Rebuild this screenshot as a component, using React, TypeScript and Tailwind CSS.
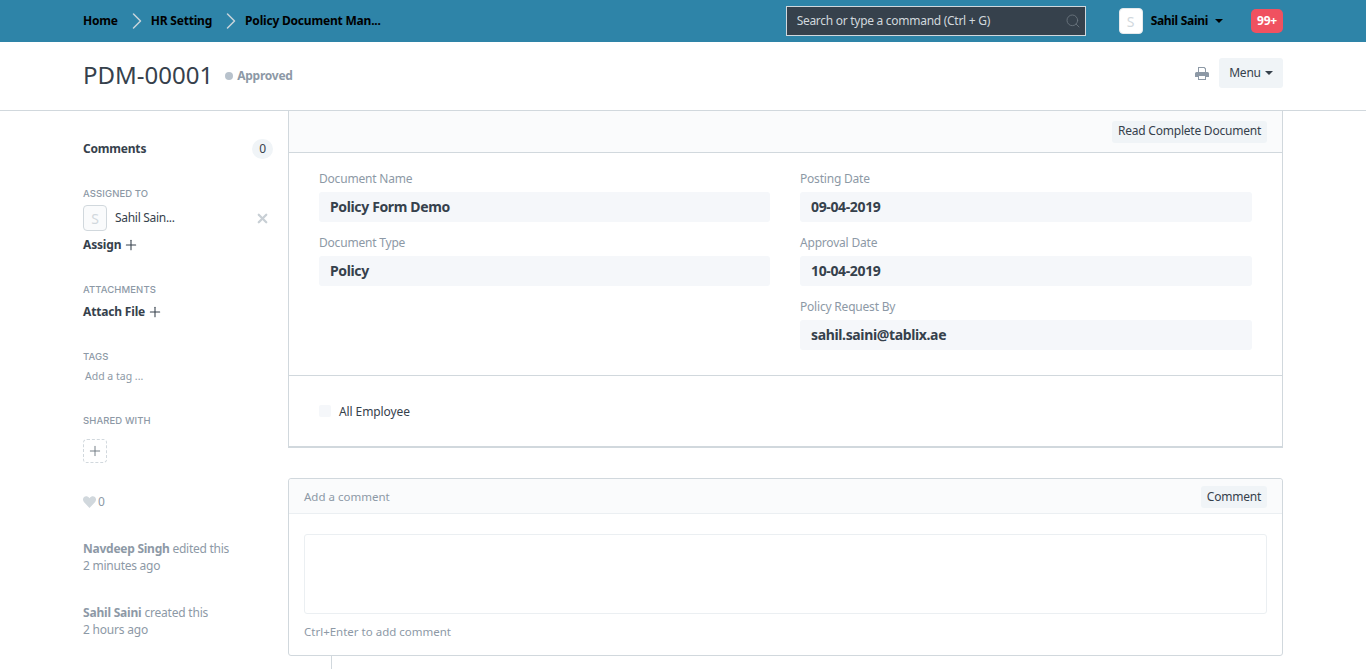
import { ChevronRight, Plus, Search, X } from 'lucide-react';

const font = "font-['Noto_Sans','Open_Sans',sans-serif]";

const Caret = ({ className = 'border-t-[#36414c]' }: { className?: string }) => (
  <span className={`inline-block w-0 h-0 border-x-[4px] border-x-transparent border-t-[4px] ${className}`}></span>
);

const SectionLabel = ({ children }: { children: string }) => (
  <div className="font-['Inter',sans-serif] text-[9.5px] leading-[12px] font-medium text-[#8d99a6] tracking-[0.1px]">{children}</div>
);

const AddLink = ({ label }: { label: string }) => (
  <div className="flex items-center gap-[2px] h-[18px] text-[12px] font-bold text-[#36414c] tracking-[-0.17px]">
    {label}
    <Plus size={16} strokeWidth={1.6} />
  </div>
);

const Field = ({ label, value }: { label: string; value: string }) => (
  <div className="mb-[11px]">
    <div className="h-[20px] mb-[3px] text-[12px] leading-[20px] text-[#8d99a6] tracking-[-0.2px]">{label}</div>
    <div className="h-[30px] px-[11px] rounded-[3px] bg-[#f5f7fa] text-[14px] leading-[30px] font-bold text-[#36414c] tracking-[-0.36px]">
      {value}
    </div>
  </div>
);

const Crumb = ({ label, last }: { label: string; last?: boolean }) => (
  <div className="flex items-center">
    <span className="text-[12px] font-bold text-black tracking-[-0.2px]">{label}</span>
    {!last && <ChevronRight size={28} strokeWidth={1.3} className="text-[#c6d3da] ml-[5px]" />}
  </div>
);

const TopBar = () => (
  <div className="h-[42px] bg-[#2e84a8] flex items-center pl-[83px] pr-[83px]">
    <Crumb label="Home" />
    <Crumb label="HR Setting" />
    <Crumb label="Policy Document Man..." last />
    <div className="ml-auto flex items-center">
      <div className="w-[300px] h-[30px] flex items-center justify-between pl-[10px] pr-[4px] bg-[#36414c] border border-[#d1d8dd] text-[12px] text-[#d1d8dd] tracking-[-0.28px]">
        Search or type a command (Ctrl + G)
        <Search size={16} strokeWidth={1.3} className="text-[#6c7680]" />
      </div>
      <div className="ml-[33px] w-[24px] h-[26px] flex items-center justify-center rounded-[4px] bg-white border border-[#e5e9ec] text-[14px] text-[#d1d8dd]">
        S
      </div>
      <div className="ml-[8px] mr-[7px] text-[12px] font-bold text-black tracking-[-0.3px]">Sahil Saini</div>
      <Caret className="border-t-black" />
      <div className="ml-[28px] w-[32px] h-[24px] flex items-center justify-center rounded-[5px] bg-[#f05160] text-[12px] font-bold text-white tracking-[-0.2px]">
        99+
      </div>
    </div>
  </div>
);

const PageHead = () => (
  <div className="h-[69px] border-b border-[#d1d8dd] flex items-start pl-[83px] pr-[83px]">
    <div className="mt-[16px] text-[24px] leading-[33px] text-[#36414c]">PDM-00001</div>
    <div className="mt-[26px] ml-[12px] flex items-center gap-[4px] text-[12px] leading-[16px] font-bold text-[#8d99a6] tracking-[-0.25px]">
      <span className="w-[8px] h-[8px] rounded-full bg-[#b8c2cc]"></span>
      Approved
    </div>
    <div className="ml-auto mt-[16px] flex items-center">
      <svg width="14" height="13" viewBox="0 0 14 13" className="mr-[10px] text-[#8d99a6]" fill="currentColor">
        <path d="M3 0h6.500L11 1.500V5h-1V2.200L9 1H4v4H3z" />
        <path d="M1.500 5h11A1.500 1.500 0 0 1 14 6.500V10h-3v3H3v-3H0V6.500A1.500 1.500 0 0 1 1.500 5zM4 9v3h6V9z" />
      </svg>
      <div className="w-[64px] h-[30px] flex items-center justify-center gap-[4px] rounded-[3px] bg-[#f0f4f7] text-[12px] text-[#36414c] tracking-[-0.2px]">
        Menu
        <Caret />
      </div>
    </div>
  </div>
);

const Sidebar = () => (
  <div className="w-[205px] shrink-0 pt-[27px] pr-[15px]">
    <div className="flex items-center justify-between h-[22px] text-[12px] font-bold text-[#36414c] tracking-[-0.2px]">
      Comments
      <span className="w-[21px] h-[20px] flex items-center justify-center rounded-full bg-[#f0f4f7] text-[12px] font-normal">0</span>
    </div>

    <div className="mt-[28px]"><SectionLabel>ASSIGNED TO</SectionLabel></div>
    <div className="mt-[5px] flex items-center">
      <div className="w-[24px] h-[26px] flex items-center justify-center rounded-[4px] border border-[#d1d8dd] bg-[#fafbfc] text-[14px] text-[#d1d8dd]">S</div>
      <span className="ml-[8px] -mt-[1px] text-[12px] text-[#36414c] tracking-[-0.3px]">Sahil Sain...</span>
      <X size={15} strokeWidth={3.6} className="ml-auto mr-[3.5px] text-[#c8cfd5]" />
    </div>
    <div className="mt-[5px]"><AddLink label="Assign" /></div>

    <div className="mt-[30px]"><SectionLabel>ATTACHMENTS</SectionLabel></div>
    <div className="mt-[7px]"><AddLink label="Attach File" /></div>

    <div className="mt-[30px]"><SectionLabel>TAGS</SectionLabel></div>
    <div className="mt-[5px] ml-[2px] h-[16px] text-[10.5px] leading-[16px] text-[#8d99a6]">Add a tag ...</div>

    <div className="mt-[31px]"><SectionLabel>SHARED WITH</SectionLabel></div>
    <div className="mt-[12px] w-[24px] h-[24px] flex items-center justify-center rounded-[4px] border border-dashed border-[#d1d8dd] text-[#6c7680]">
      <Plus size={16} strokeWidth={1.4} />
    </div>

    <div className="mt-[31px] flex items-center gap-[2px] h-[16px] text-[12px] text-[#8d99a6]">
      <svg width="13" height="12" viewBox="0 0 24 22" fill="#d1d8dd">
        <path d="M12 22 2 11.500C-.8 8.400-.6 4 2 1.800 4.800-.7 9 0 12 4c3-4 7.200-4.700 10-2.200 2.600 2.200 2.800 6.600 0 9.700z" />
      </svg>
      0
    </div>

    <div className="mt-[30px] text-[12px] leading-[17px] text-[#8d99a6] tracking-[-0.25px]">
      <div><b>Navdeep Singh</b> edited this</div>
      <div>2 minutes ago</div>
    </div>
    <div className="mt-[30px] text-[12px] leading-[17px] text-[#8d99a6] tracking-[-0.2px]">
      <div><b>Sahil Saini</b> created this</div>
      <div>2 hours ago</div>
    </div>
  </div>
);

const FormCard = () => (
  <div className="border-x border-b-2 border-[#d1d8dd]">
    <div className="h-[42px] bg-[#fafbfc] border-b border-[#d1d8dd] flex items-center justify-end pr-[15px]">
      <div className="h-[22px] w-[155px] flex items-center justify-center pb-[2px] rounded-[3px] bg-[#f0f4f7] text-[12px] text-[#36414c] tracking-[-0.22px]">
        Read Complete Document
      </div>
    </div>
    <div className="flex gap-[30px] pl-[30px] pr-[30px] pt-[16px] pb-[14px] border-b border-[#d1d8dd]">
      <div className="w-[451px]">
        <Field label="Document Name" value="Policy Form Demo" />
        <Field label="Document Type" value="Policy" />
      </div>
      <div className="w-[452px]">
        <Field label="Posting Date" value="09-04-2019" />
        <Field label="Approval Date" value="10-04-2019" />
        <Field label="Policy Request By" value="sahil.saini@tablix.ae" />
      </div>
    </div>
    <div className="h-[70px] pl-[30px] pt-[29px] flex items-start">
      <span className="w-[12px] h-[12px] rounded-[2px] bg-[#f5f7fa]"></span>
      <span className="ml-[8px] -mt-[1px] text-[12px] leading-[16px] text-[#36414c] tracking-[-0.1px]">All Employee</span>
    </div>
  </div>
);

const CommentBox = () => (
  <div className="relative mt-[30px] border border-[#d1d8dd] rounded-[3px] h-[178px]">
    <div className="h-[35px] bg-[#fafbfc] border-b border-[#ebeff2] flex items-center justify-between pt-[1px] pl-[15px] pr-[15px] rounded-t-[3px]">
      <span className="text-[11.5px] text-[#8d99a6]">Add a comment</span>
      <span className="w-[66px] h-[22px] flex items-center justify-center rounded-[3px] bg-[#f0f4f7] text-[12px] text-[#36414c] tracking-[-0.2px]">Comment</span>
    </div>
    <div className="mx-[15px] mt-[20px] h-[80px] rounded-[3px] border border-[#ebeff2]"></div>
    <div className="ml-[15px] mt-[10px] text-[11.5px] leading-[16px] text-[#8d99a6]">Ctrl+Enter to add comment</div>
    <div className="absolute left-[42px] top-[177px] w-px h-[14px] bg-[#d1d8dd]"></div>
  </div>
);

const App = () => (
  <div className={`h-[669px] overflow-hidden bg-white ${font}`}>
    <TopBar />
    <PageHead />
    <div className="flex pl-[83px] pr-[83px]">
      <Sidebar />
      <div className="flex-1">
        <FormCard />
        <CommentBox />
      </div>
    </div>
  </div>
);

export default App;
